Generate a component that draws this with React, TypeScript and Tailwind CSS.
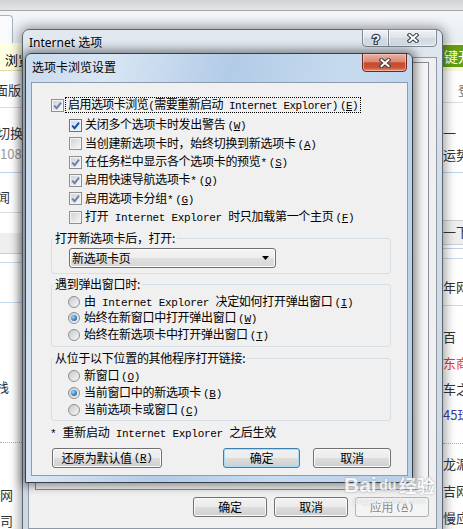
import React from 'react';

// Latin runs use a narrow serif mono, like the bitmap font of the dialog
const L = ({ children }: { children: React.ReactNode }) => (
  <span className="font-['Liberation_Mono',monospace] text-[11px]">{children}</span>
);

const Acc = ({ k }: { k: string }) => (
  <span className="ml-[2px] font-['Liberation_Mono',monospace] text-[11px]">
    (<span className="underline underline-offset-1">{k}</span>)
  </span>
);

const Check = ({ on, hot }: { on?: boolean; hot?: boolean }) => (
  <span
    className={`flex h-[13px] w-[13px] shrink-0 items-center justify-center border ${
      hot
        ? 'border-[#3c7fb1] bg-[linear-gradient(135deg,#b9e2fb,#eaf6fd)]'
        : 'border-[#8e8f8f] bg-[linear-gradient(135deg,#cdd0d5,#f8f8f8)]'
    } shadow-[inset_0_0_0_1px_#f4f4f4]`}
  >
    {on && (
      <svg width="9" height="9" viewBox="0 0 9 9">
        <path d="M1.2 4.6 L3.6 7.2 L8 1.6" fill="none" stroke={hot ? '#1d47ad' : '#6c7eae'} strokeWidth="1.9" />
      </svg>
    )}
  </span>
);

const Radio = ({ on }: { on?: boolean }) => (
  <span className="flex h-[12px] w-[12px] shrink-0 items-center justify-center rounded-full border border-[#8e8f8f] bg-[linear-gradient(135deg,#c6c9ce,#f7f7f7)]">
    {on && <span className="h-[6px] w-[6px] rounded-full bg-[radial-gradient(circle_at_35%_35%,#9ad9fd,#1e63ab_75%)]" />}
  </span>
);

const CheckRow = ({ on, hot, h, children }: { on?: boolean; hot?: boolean; h: string; children: React.ReactNode }) => (
  <div className={`flex items-center gap-[3px] ${h}`}>
    <Check on={on} hot={hot} />
    <span>{children}</span>
  </div>
);

const RadioRow = ({ on, h, children }: { on?: boolean; h: string; children: React.ReactNode }) => (
  <div className={`flex items-center gap-[4px] ${h}`}>
    <Radio on={on} />
    <span>{children}</span>
  </div>
);

const Group = ({ title, className, children }: { title: string; className: string; children: React.ReactNode }) => (
  <fieldset className={`w-[340px] rounded-[3px] border border-[#d5dfe5] ${className}`}>
    <legend className="ml-[1px] px-[2px] leading-[14px]">{title}</legend>
    {children}
  </fieldset>
);

const btnFace = 'bg-[linear-gradient(#f2f2f2_0%,#ebebeb_50%,#dddddd_51%,#cfcfcf_100%)]';

const Btn = ({ className, children }: { className: string; children: React.ReactNode }) => (
  <div className={`flex h-[20px] items-center justify-center rounded-[3px] border ${btnFace} ${className}`}>
    {children}
  </div>
);

const XGlyph = () => (
  <svg width="12" height="10" viewBox="0 0 12 10">
    <path d="M2.5 2 L9.5 8 M9.5 2 L2.5 8" stroke="#383c42" strokeWidth="4" strokeLinecap="square" />
    <path d="M2.5 2 L9.5 8 M9.5 2 L2.5 8" stroke="#ffffff" strokeWidth="2" strokeLinecap="square" />
  </svg>
);

const BrowserPage = () => (
  <div className="flex h-full flex-col font-['Noto_Sans_CJK_SC',sans-serif] text-[13px] text-[#333]">
    <div className="h-[11px] shrink-0 border-b border-[#a3a7ad] bg-[linear-gradient(#d2d3d5,#e4e5e7)]" />
    <div className="h-[32px] shrink-0 bg-[linear-gradient(#f3f6f9,#e9eef4)]">
      <div className="mt-[4px] h-[28px] w-[13px] rounded-tr-[4px] border border-l-0 border-b-0 border-[#a9b3bf] bg-[#f8fafc]" />
    </div>
    <div className="flex flex-1">
      {/* left strip of the page */}
      <div className="flex w-[30px] shrink-0 flex-col overflow-hidden whitespace-nowrap">
        <div className="h-[28px] shrink-0 border-b border-[#e2dba9] bg-[#ffffe1] pl-[5px] pt-[10px] leading-[14px] text-black">浏览</div>
        <div className="h-[37px] shrink-0 border-b border-[#dddddd] pt-[12px] leading-[14px]">
          <span className="-ml-[5px]">面版</span>
        </div>
        <div className="h-[65px] shrink-0 border-b border-[#bcd6ee] pt-[18px] leading-[14px]">
          <div className="-ml-[3px]">切换</div>
          <div className="mt-[7px] text-[#999]">108</div>
        </div>
        <div className="h-[40px] shrink-0 border-b border-[#dddddd] pt-[17px] leading-[14px]">
          <span className="-ml-[3px]">闻</span>
        </div>
        <div className="h-[20px] shrink-0" />
        <div className="h-[21px] shrink-0 border-b border-[#b9d3ee] bg-[#efefef]" />
        <div className="h-[9px] shrink-0 border-b border-[#c5dcf2]" />
        <div className="h-[40px] shrink-0 border-b border-[#c5dcf2]" />
        <div className="h-[140px] shrink-0 border-b border-dotted border-[#8fb6e0] pt-[77px] leading-[14px]">
          <span className="-ml-[4px]">栈</span>
        </div>
        <div className="pt-[45px] leading-[14px]">
          <div>网</div>
          <div className="mt-[12px]">司</div>
        </div>
      </div>
      <div className="flex-1" />
      {/* right strip of the page */}
      <div className="flex w-[25px] shrink-0 flex-col overflow-hidden whitespace-nowrap pl-[5px]">
        <div className="h-[28px] shrink-0 bg-[#fbf7dc] pt-[2px]">
          <div className="flex h-[22px] items-center bg-[#629f14] pl-[1px] text-[14px] text-white">键开</div>
        </div>
        <div className="h-[32px] shrink-0 border-b border-[#dddddd] pl-[15px] pt-[12px] leading-[14px] text-[#777]">登</div>
        <div className="h-[70px] shrink-0 border-b border-[#bcd6ee] pt-[23px] leading-[14px]">
          <div>一</div>
          <div className="mt-[8px]">运势</div>
        </div>
        <div className="h-[47px] shrink-0" />
        <div className="h-[25px] shrink-0 border-y border-[#cfcfcf] bg-[#efefef] pt-[4px] leading-[14px]">一下</div>
        <div className="h-[4px] shrink-0 border-b border-[#b9d3ee]" />
        <div className="h-[10px] shrink-0 border-b border-[#c5dcf2]" />
        <div className="h-[47px] shrink-0 border-b border-[#c5dcf2] pt-[21px] leading-[14px]">年网</div>
        <div className="h-[138px] shrink-0 border-b border-dotted border-[#8fb6e0] pt-[18px]">
          <div className="h-[26px] leading-[26px]">百</div>
          <div className="h-[26px] leading-[26px] text-[#ee3b12]">东商</div>
          <div className="h-[26px] leading-[26px]">车之</div>
          <div className="h-[26px] leading-[26px] text-[#3540a8]">45球</div>
        </div>
        <div className="pt-[6px]">
          <div className="h-[27px] leading-[27px]">龙湄</div>
          <div className="h-[27px] leading-[27px]">吉网</div>
          <div className="h-[27px] leading-[27px]">慢应</div>
        </div>
      </div>
    </div>
  </div>
);

const OuterDialog = () => (
  <div className="absolute left-[22px] top-[29px] flex h-[510px] w-[421px] flex-col rounded-t-[7px] border border-[#5c6671] bg-[linear-gradient(#e1e8ef,#d3dde7_30%,#cdd8e3)] px-[5px] shadow-[0_0_12px_2px_rgba(0,0,0,0.4)]">
    <div className="flex h-[27px] shrink-0 items-start justify-between">
      <span className="pl-[1px] pt-[6px] font-['Noto_Sans','Noto_Sans_CJK_SC',sans-serif] text-[12px] leading-[14px] text-black">
        Internet 选项
      </span>
      <div className="-mt-[1px] flex">
        <div className="flex h-[18px] w-[27px] items-center justify-center rounded-bl-[4px] border border-[#7d8996] bg-[linear-gradient(#f1f4f7,#dde3ea_50%,#d0d8e1_51%,#dbe2e9)] shadow-[inset_0_0_0_1px_rgba(255,255,255,0.6)]">
          <svg width="10" height="13" viewBox="0 0 10 13">
            <text x="5" y="11.5" textAnchor="middle" fontSize="13" fontWeight="bold" fontFamily="Liberation Sans" fill="#fff" stroke="#3b434d" strokeWidth="2.4" paintOrder="stroke">?</text>
          </svg>
        </div>
        <div className="-ml-[1px] flex h-[18px] w-[49px] items-center justify-center rounded-br-[4px] border border-[#7d8996] bg-[linear-gradient(#f1f4f7,#dde3ea_50%,#d0d8e1_51%,#dbe2e9)] shadow-[inset_0_0_0_1px_rgba(255,255,255,0.6)]">
          <XGlyph />
        </div>
      </div>
    </div>
    <div className="flex h-[472px] shrink-0 flex-col border border-[#8e9aa7] bg-[#f0f0f0] pl-[6px] pr-[7px] pt-[4px] font-['Noto_Sans_CJK_SC',sans-serif] text-[12px] tracking-[-0.3px] text-black">
      <div className="h-[428px] w-[394px] shrink-0 border border-[#898c95] bg-[#f5f5f5]" />
      <div className="mt-[7px] flex justify-end gap-[7px]">
        <Btn className="w-[74px] border-[#707070] shadow-[inset_0_0_0_1px_#fbfbfb]">确定</Btn>
        <Btn className="w-[74px] border-[#707070] shadow-[inset_0_0_0_1px_#fbfbfb]">取消</Btn>
        <div className="flex h-[20px] w-[74px] items-center justify-center rounded-[3px] border border-[#adb2b5] bg-[#f4f4f4] text-[#8a8a8a]">
          应用<Acc k="A" />
        </div>
      </div>
    </div>
  </div>
);

const TabDialog = () => (
  <div className="absolute left-[25px] top-[53px] flex h-[430px] w-[388px] flex-col rounded-t-[6px] border border-[#37404a] bg-[linear-gradient(100deg,#c9dbef_0%,#d9e6f4_18%,#b2cbe7_45%,#c7dbef_70%,#b7cfe9_100%)] pb-[6px] shadow-[0_0_10px_3px_rgba(0,0,0,0.45)]">
    <div className="flex h-[28px] shrink-0 items-start justify-between">
      <span className="pl-[6px] pt-[6px] font-['Noto_Sans_CJK_SC',sans-serif] text-[12px] leading-[14px] text-black">
        选项卡浏览设置
      </span>
      <div className="-mt-[1px] mr-[5px] flex h-[19px] w-[45px] items-center justify-center rounded-b-[4px] border border-[#6b2a1f] bg-[linear-gradient(#eab0a2_0%,#dc8a74_45%,#c64a2f_52%,#cd5236_80%,#e39374_100%)] shadow-[inset_0_0_0_1px_rgba(255,220,210,0.5)]">
        <XGlyph />
      </div>
    </div>
    <div className="ml-[5px] mr-[4px] flex h-[394px] shrink-0 flex-col border border-[#8c9cae] bg-[#f0f0f0] pl-[19px] pt-[13px] font-['Noto_Sans_CJK_SC',sans-serif] text-[12px] leading-[14px] tracking-[-0.3px] text-black">
      <div className="flex h-[18px] items-center">
        <Check on />
        <span className="ml-[1px] border border-dotted border-black px-[2px] leading-[12px] tracking-[-0.55px]">
          启用选项卡浏览<L>(</L>需要重新启动<L> Internet Explorer)</L><Acc k="E" />
        </span>
      </div>
      <div className="mt-[2px] pl-[18px]">
        <CheckRow on hot h="h-[18px]">
          关闭多个选项卡时发出警告<Acc k="W" />
        </CheckRow>
        <CheckRow h="h-[19px]">
          当创建新选项卡时，始终切换到新选项卡<Acc k="A" />
        </CheckRow>
        <CheckRow on h="h-[18px]">
          在任务栏中显示各个选项卡的预览<L>*</L><Acc k="S" />
        </CheckRow>
        <CheckRow on h="h-[18px]">
          启用快速导航选项卡<L>*</L><Acc k="Q" />
        </CheckRow>
        <CheckRow on h="h-[19px]">
          启用选项卡分组<L>*</L><Acc k="G" />
        </CheckRow>
        <CheckRow h="h-[18px]">
          打开<L> Internet Explorer </L>时只加载第一个主页<Acc k="F" />
        </CheckRow>
      </div>

      <Group title="打开新选项卡后，打开:" className="mt-[5px] pb-[5px]">
        <div className="ml-[17px] mt-[3px] flex h-[20px] w-[207px] items-center justify-between rounded-[3px] border border-[#707070] bg-[linear-gradient(#f4f4f4_0%,#ededed_50%,#e0e0e0_51%,#d6d6d6_100%)] pl-[2px] pr-[6px] shadow-[inset_0_0_0_1px_#fcfcfc]">
          <span>新选项卡页</span>
          <svg width="7" height="4" viewBox="0 0 7 4">
            <path d="M0 0H7L3.5 4Z" fill="#000" />
          </svg>
        </div>
      </Group>

      <Group title="遇到弹出窗口时:" className="mt-[3px] pb-[3px]">
        <div className="mt-[3px] pl-[16px]">
          <RadioRow h="h-[16px]">
            由<L> Internet Explorer </L>决定如何打开弹出窗口<Acc k="I" />
          </RadioRow>
          <RadioRow on h="h-[16px]">
            始终在新窗口中打开弹出窗口<Acc k="W" />
          </RadioRow>
          <RadioRow h="h-[17px]">
            始终在新选项卡中打开弹出窗口<Acc k="T" />
          </RadioRow>
        </div>
      </Group>

      <Group title="从位于以下位置的其他程序打开链接:" className="mt-[4px] pb-[2px]">
        <div className="mt-[2px] pl-[16px]">
          <RadioRow h="h-[17px]">
            新窗口<Acc k="O" />
          </RadioRow>
          <RadioRow on h="h-[17px]">
            当前窗口中的新选项卡<Acc k="B" />
          </RadioRow>
          <RadioRow h="h-[17px]">
            当前选项卡或窗口<Acc k="C" />
          </RadioRow>
        </div>
      </Group>

      <div className="-ml-[1px] mt-[4px] h-[14px]">
        <L>* </L>重新启动<L> Internet Explorer </L>之后生效
      </div>

      <div className="mt-[9px] flex">
        <Btn className="ml-[1px] w-[110px] border-[#707070] shadow-[inset_0_0_0_1px_#fbfbfb]">
          还原为默认值<Acc k="R" />
        </Btn>
        <Btn className="ml-[61px] w-[77px] border-[#3c7fb1] shadow-[inset_0_0_0_1px_#a9dcf7]">确定</Btn>
        <Btn className="ml-[13px] w-[78px] border-[#707070] shadow-[inset_0_0_0_1px_#fbfbfb]">取消</Btn>
      </div>
    </div>
  </div>
);

const Watermark = () => (
  <div className="pointer-events-none absolute left-[344px] top-[474px] flex flex-col items-center opacity-80">
    <div className="flex items-end font-['Liberation_Sans',sans-serif] text-[21px] font-bold leading-[22px] text-white [text-shadow:0_0_1px_#9aa3ad,0_0_2px_#9aa3ad]">
      <span>Bai</span>
      <span className="ml-[1px] mr-[1px] flex h-[22px] w-[20px] items-center justify-center rounded-[5px] text-[14px]">du</span>
      <span className="font-['Noto_Sans_CJK_SC',sans-serif] text-[18px]">经验</span>
    </div>
    <div className="font-['Liberation_Sans',sans-serif] text-[9px] leading-[10px] text-white [text-shadow:0_0_1px_#9aa3ad]">jingyan.baidu.com</div>
  </div>
);

export default function App() {
  return (
    <div className="relative h-[529px] w-[463px] overflow-hidden bg-white">
      <BrowserPage />
      <OuterDialog />
      <TabDialog />
      <Watermark />
    </div>
  );
}
